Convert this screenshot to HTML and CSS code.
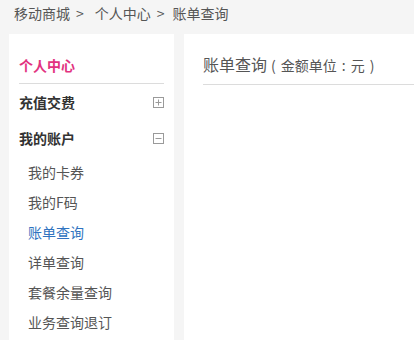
FILE: index.html
```html
<!DOCTYPE html>
<html lang="zh-CN">
<head>
<meta charset="utf-8">
<title>账单查询</title>
<link rel="stylesheet" href="styles.css">
</head>
<body>
<div class="crumb"><span>移动商城</span><span class="sep sep-wide">&gt;</span><span>个人中心</span><span class="sep">&gt;</span><span>账单查询</span></div>
<div class="wrap">
  <aside class="side">
    <div class="side-title">个人中心</div>
    <div class="group">
      <span>充值交费</span>
      <svg class="tog" width="11" height="11" viewBox="0 0 11 11"><rect x="0.5" y="0.5" width="10" height="10" fill="none" stroke="#9a9a9a"/><path d="M2.5 5.5h6M5.5 2.5v6" stroke="#9a9a9a" fill="none"/></svg>
    </div>
    <div class="group">
      <span>我的账户</span>
      <svg class="tog" width="11" height="11" viewBox="0 0 11 11"><rect x="0.5" y="0.5" width="10" height="10" fill="none" stroke="#9a9a9a"/><path d="M2.5 5.5h6" stroke="#9a9a9a" fill="none"/></svg>
    </div>
    <ul class="sub">
      <li>我的卡券</li>
      <li>我的F码</li>
      <li class="active">账单查询</li>
      <li>详单查询</li>
      <li>套餐余量查询</li>
      <li>业务查询退订</li>
    </ul>
  </aside>
  <main class="main">
    <div class="main-title">账单查询<span class="unit"><span class="paren-l">(</span>金额单位<span class="colon">:</span>元<span class="paren-r">)</span></span></div>
  </main>
</div>
</body>
</html>
```
FILE: styles.css
```css
html, body {
  margin: 0;
  padding: 0;
  background: #f5f5f5;
  font-family: "Noto Sans CJK SC", "Noto Sans", sans-serif;
  color: #555;
}
.crumb {
  height: 34px;
  box-sizing: border-box;
  padding: 3px 0 0 14px;
  font-size: 14px;
  line-height: 20px;
  color: #555;
  display: flex;
}
.sep {
  margin: 0 8px 0 6px;
}
.sep-wide {
  margin-right: 11px;
}
.wrap {
  display: flex;
  gap: 10px;
  padding-left: 9px;
  height: 306px;
}
.side {
  width: 165px;
  flex: none;
  background: #fff;
  box-sizing: border-box;
  padding: 0 10px;
}
.side-title {
  padding: 19px 0 6px;
  line-height: 24px;
  font-size: 14px;
  font-weight: bold;
  color: #e2327f;
  border-bottom: 1px solid #dcdcdc;
}
.group {
  display: flex;
  align-items: center;
  justify-content: space-between;
  height: 36px;
  font-size: 14px;
  font-weight: bold;
  color: #333;
}
.tog {
  display: block;
}
.sub {
  list-style: none;
  margin: 0;
  padding: 1px 0 0 9px;
}
.sub li {
  height: 30px;
  line-height: 30px;
  font-size: 14px;
  color: #555;
}
.sub li.active {
  color: #2f73c0;
}
.main {
  flex: 1;
  background: #fff;
  padding-left: 19px;
}
.main-title {
  padding: 18px 0 7px;
  line-height: 24px;
  font-size: 16px;
  color: #555;
  border-bottom: 1px solid #dcdcdc;
}
.unit {
  font-size: 14px;
  margin-left: 4px;
}
.paren-l {
  margin-right: 5px;
}
.paren-r {
  margin-left: 5px;
}
.colon {
  display: inline-block;
  width: 14px;
  text-align: center;
}
```
